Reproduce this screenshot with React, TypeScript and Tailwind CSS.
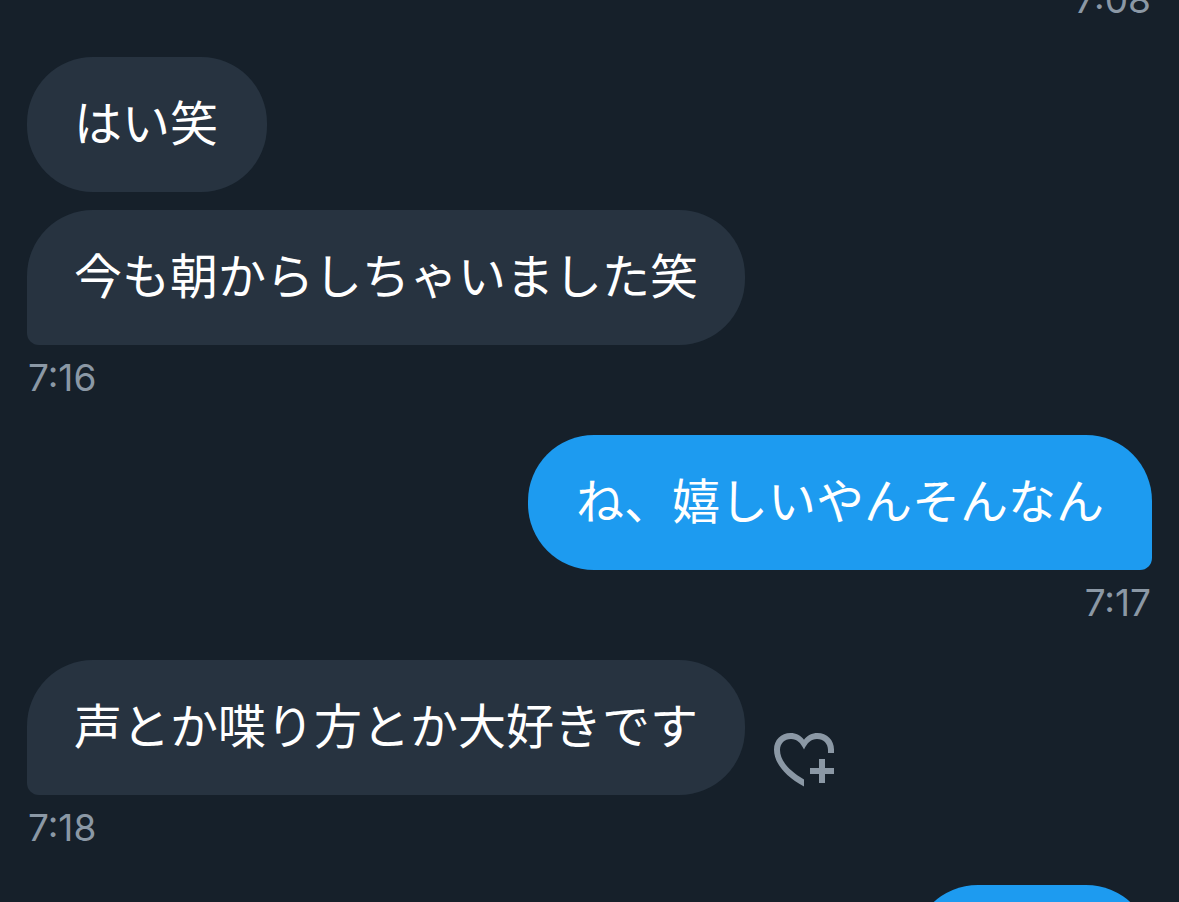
import React from "react";

type Message = {
  id: number;
  text: string;
  mine?: boolean;
  time?: string;
  canReact?: boolean;
};

const messages: Message[] = [
  { id: 1, text: "はい笑" },
  { id: 2, text: "今も朝からしちゃいました笑", time: "7:16" },
  { id: 3, text: "ね、嬉しいやんそんなん", mine: true, time: "7:17" },
  { id: 4, text: "声とか喋り方とか大好きです", time: "7:18", canReact: true },
  { id: 5, text: "", mine: true },
];

const HeartPlusIcon = () => (
  <svg viewBox="0 0 60 54" className="w-[60px] h-[54px]" fill="currentColor">
    <path d="M60 20V16.5C60 7 53 0 43.5 0C38 0 33 2.5 30 6.8C27 2.5 22 0 16.5 0C7 0 0 7 0 16.5C0 30 11 43 30 53.5V46.5C14 37 6 27 6 17C6 10.5 10.5 6 17 6C23 6 26.5 9.5 30 16.5C33.5 9.5 37 6 43 6C49.5 6 54 10.5 54 17V20Z" />
    <path d="M45 26h6v9h9v6h-9v9h-6v-9h-9v-6h9z" />
  </svg>
);

const Time = ({ value }: { value: string }) => (
  <time className="mt-3 px-px text-[37px] leading-[42px] text-[#8b98a5] font-['Inter','Liberation_Sans',sans-serif]">
    {value}
  </time>
);

const MessageRow = ({ message }: { message: Message }) => {
  const { text, mine, time, canReact } = message;
  // the last bubble of a group gets the small corner on its own side
  const corner = mine ? "rounded-br-xl" : time ? "rounded-bl-xl" : "";

  return (
    <li
      className={`flex flex-col ${mine ? "items-end" : "items-start"} ${
        time ? "mb-9" : "mb-[18px]"
      }`}
    >
      <div className="flex items-end gap-[29px]">
        <p
          className={`min-w-60 min-h-[135px] pt-8 pb-10 text-5xl leading-[63px] text-white rounded-[66px] ${corner} ${
            mine ? "px-12 bg-[#1d9bf0]" : "px-[47px] bg-[#273340]"
          }`}
        >
          {text}
        </p>
        {canReact && (
          <button
            type="button"
            aria-label="リアクションを追加"
            className="mb-2 text-[#8b98a5]"
          >
            <HeartPlusIcon />
          </button>
        )}
      </div>
      {time && <Time value={time} />}
    </li>
  );
};

const App = () => {
  return (
    <main className="h-screen overflow-hidden bg-[#16202a] px-[27px] font-['Noto_Sans_CJK_JP',sans-serif]">
      {/* the thread is scrolled, so the first time label is cut at the top */}
      <div className="flex justify-end -mt-[33px] mb-9">
        <Time value="7:08" />
      </div>
      <ul>
        {messages.map((message) => (
          <MessageRow key={message.id} message={message} />
        ))}
      </ul>
    </main>
  );
};

export default App;
